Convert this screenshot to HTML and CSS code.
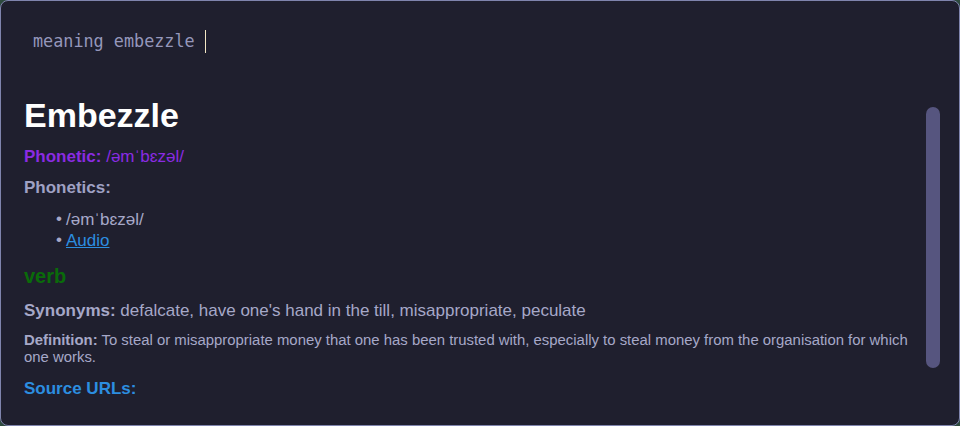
FILE: index.html
```html
<!DOCTYPE html>
<html>
<head>
<meta charset="utf-8">
<link rel="stylesheet" href="styles.css">
</head>
<body>
<div class="window">
  <div class="prompt">
    <span class="query">meaning embezzle</span><span class="cursor"></span>
  </div>
  <div class="body">
    <div class="content">
      <h1 class="word">Embezzle</h1>
      <p class="phonetic"><b>Phonetic:</b> /əmˈbɛzəl/</p>
      <p class="label">Phonetics:</p>
      <ul class="phonetics">
        <li>/əmˈbɛzəl/</li>
        <li><a href="#" class="link">Audio</a></li>
      </ul>
      <h2 class="pos">verb</h2>
      <p class="synonyms"><b>Synonyms:</b> defalcate, have one's hand in the till, misappropriate, peculate</p>
      <p class="definition"><b>Definition:</b> To steal or misappropriate money that one has been trusted with, especially to steal money from the organisation for which one works.</p>
      <p class="sources">Source URLs:</p>
    </div>
    <div class="scrollbar"><div class="thumb"></div></div>
  </div>
</div>
</body>
</html>
```
FILE: styles.css
```css
html, body {
  margin: 0;
  padding: 0;
  height: 100%;
  background: #2e4a3e;
}
.window {
  box-sizing: border-box;
  height: 426px;
  width: 960px;
  border: 1px solid #7f84ad;
  border-radius: 8px;
  background: #1f1f2e;
  display: flex;
  flex-direction: column;
  overflow: hidden;
  font-family: "Liberation Sans", Arial, sans-serif;
  color: #a6a8c8;
}
.prompt {
  display: flex;
  align-items: center;
  padding: 28px 0 0 32px;
  height: 24px;
}
.query {
  font-family: "DejaVu Sans Mono", monospace;
  font-size: 16.8px;
  color: #9597bb;
}
.cursor {
  display: inline-block;
  width: 1px;
  height: 23px;
  background: #f3e7c4;
  margin-left: 10px;
}
.body {
  flex: 1;
  display: flex;
  min-height: 0;
  padding-top: 42px;
}
.content {
  flex: 1;
  overflow: hidden;
  padding-left: 23px;
  padding-right: 14px;
}
.word {
  margin: 0;
  font-size: 34px;
  line-height: 40px;
  color: #ffffff;
  font-weight: bold;
}
.phonetic {
  margin: 12px 0 0;
  font-size: 17px;
  line-height: 20px;
  color: #8a2be2;
}
.label {
  margin: 11px 0 0;
  font-size: 17px;
  line-height: 20px;
  font-weight: bold;
  color: #9fa1c4;
}
.phonetics {
  margin: 11px 0 0;
  padding-left: 32px;
  list-style: none;
  font-size: 17px;
  line-height: 21px;
  color: #a6a8c8;
}
.phonetics li::before {
  content: "\2022";
  display: inline-block;
  width: 10px;
  line-height: 0;
  vertical-align: 1px;
}
.link {
  color: #2c8ee0;
}
.pos {
  margin: 12px 0 0;
  font-size: 20px;
  line-height: 26px;
  color: #0a6b0a;
  font-weight: bold;
}
.synonyms {
  margin: 12px 0 0;
  font-size: 17px;
  line-height: 20px;
}
.definition {
  margin: 11px 0 0;
  font-size: 14.9px;
  line-height: 17px;
}
.sources {
  margin: 13px 0 0;
  font-size: 17px;
  line-height: 20px;
  font-weight: bold;
  color: #2c8ee0;
}
.scrollbar {
  width: 14px;
  margin-right: 19px;
  padding-top: 12px;
}
.thumb {
  height: 261px;
  border-radius: 7px;
  background: #56557f;
}
```
